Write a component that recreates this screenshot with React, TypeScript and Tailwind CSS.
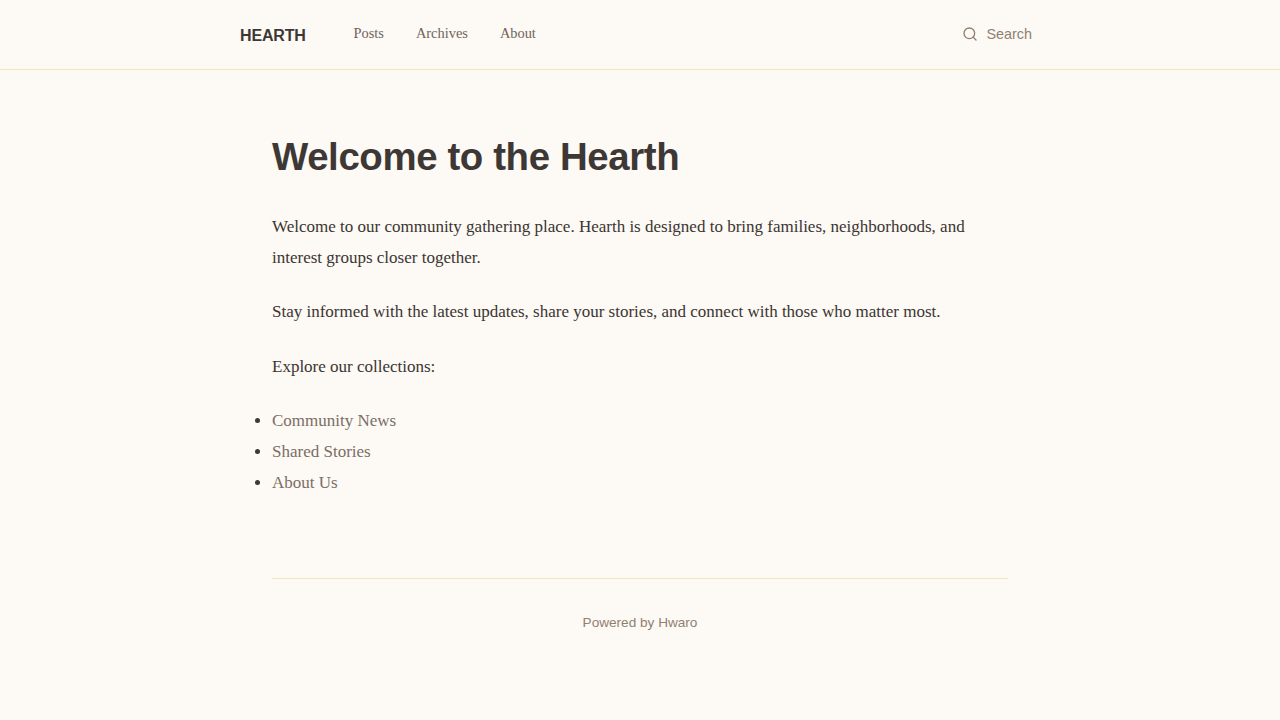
import { Search } from "lucide-react";

const navLinks = ["Posts", "Archives", "About"];
const collections = ["Community News", "Shared Stories", "About Us"];

const App = () => {
  return (
    <div className="min-h-screen bg-[#fdf9f4] font-['Liberation_Serif',serif] text-[17px] leading-[1.8] text-[#3a3532]">
      <header className="h-[70px] border-b border-[#f5e6c0]">
        <nav className="mx-auto flex h-[69px] w-[800px] items-center">
          <a className="pt-1 font-['Liberation_Sans',sans-serif] text-[16px] font-bold tracking-[-0.16px] text-[#3d3835]">
            HEARTH
          </a>
          <ul className="ml-[47.8px] flex gap-8 pb-[1px] text-[14.4px] text-[#6f645c]">
            {navLinks.map((link) => (
              <li key={link}>{link}</li>
            ))}
          </ul>
          <div className="ml-auto mr-2 flex items-center gap-2 font-['Liberation_Sans',sans-serif] text-[14.4px] text-[#907f72]">
            <Search size={16} strokeWidth={2} />
            <span>Search</span>
          </div>
        </nav>
      </header>
      <main className="mx-auto w-[800px] px-8 pt-16">
        <h1 className="mb-8 font-['Liberation_Sans',sans-serif] text-[38.4px] leading-[1.2] font-bold tracking-[-0.384px] text-[#3d3835]">
          Welcome to the Hearth
        </h1>
        <p className="mb-6">
          Welcome to our community gathering place. Hearth is designed to bring families, neighborhoods, and interest
          groups closer together.
        </p>
        <p className="mb-6">
          Stay informed with the latest updates, share your stories, and connect with those who matter most.
        </p>
        <p className="mb-6">Explore our collections:</p>
        <ul className="list-disc">
          {collections.map((item) => (
            <li key={item} className="text-[#3d3835]">
              <a className="text-[#7a6e66]">{item}</a>
            </li>
          ))}
        </ul>
      </main>
      <footer className="mx-auto mt-20 w-[736px] border-t border-[#f5e6c0] pt-8 text-center font-['Liberation_Sans',sans-serif] text-[13.6px] text-[#907f72]">
        Powered by Hwaro
      </footer>
    </div>
  );
};

export default App;
